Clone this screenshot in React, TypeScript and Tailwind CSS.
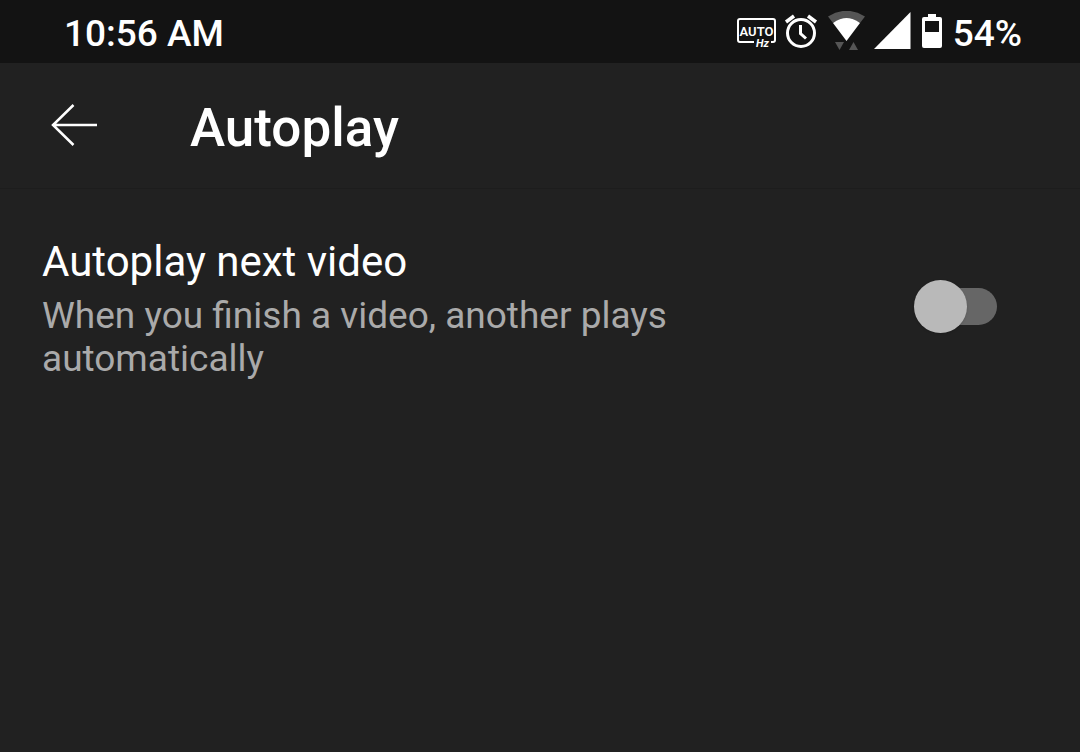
import { useState } from 'react';

function AutoHzIcon() {
  return (
    <svg width="40" height="40" viewBox="0 0 40 40" fill="none" aria-hidden="true">
      <path
        d="M18 31H4a2 2 0 0 1-2-2V10a2 2 0 0 1 2-2h33a2 2 0 0 1 2 2v19a2 2 0 0 1-2 2h-2"
        stroke="white"
        strokeWidth="2"
      />
      <text x="20.500" y="25" fill="white" fontSize="13" fontWeight="600" textAnchor="middle">
        AUTO
      </text>
      <text x="20" y="36" fill="white" fontSize="11" fontWeight="700" fontStyle="italic">
        Hz
      </text>
    </svg>
  );
}

function AlarmIcon() {
  return (
    <svg width="34" height="40" viewBox="0 0 34 40" fill="none" stroke="white" aria-hidden="true">
      <circle cx="17" cy="22" r="13.5" strokeWidth="3" />
      <path d="M16.500 14v8.500l5.500 5" strokeWidth="3" />
      <path d="M2 11l8-6M32 11l-8-6" strokeWidth="3.500" />
    </svg>
  );
}

function WifiIcon() {
  return (
    <svg width="38" height="40" viewBox="0 0 38 40" aria-hidden="true">
      <path d="M0 5.500Q18.500-6 37 5.500L32 12Q18.500 2 5 12z" fill="#555555" />
      <path d="M5 12Q18.500 2 32 12L18.500 30z" fill="white" />
      <path d="M7 31h9l-4.500 8zM21 39h9l-4.500-8z" fill="#555555" />
    </svg>
  );
}

function SignalIcon() {
  return (
    <svg width="38" height="38" viewBox="0 0 38 38" fill="white" aria-hidden="true">
      <path d="M0 37L36.500 0v37z" />
    </svg>
  );
}

function BatteryIcon() {
  return (
    <svg width="20" height="34" viewBox="0 0 20 34" aria-hidden="true">
      <path d="M6 0h8v3h4a2 2 0 0 1 2 2v27a2 2 0 0 1-2 2H2a2 2 0 0 1-2-2V5a2 2 0 0 1 2-2h4z" fill="white" />
      <path d="M3 7h14v11H3z" fill="#131313" />
    </svg>
  );
}

function StatusBar() {
  return (
    <div className="flex h-[63px] items-center justify-between bg-[#131313] pt-1 pr-[58px] pl-16 text-[37px] leading-[43px] font-medium">
      <span>10:56 AM</span>
      <div className="flex items-center">
        <div className="mr-[11px] flex items-center pb-1.5">
          <AutoHzIcon />
          <div className="mr-2.5 ml-2">
            <AlarmIcon />
          </div>
          <WifiIcon />
          <div className="mr-2.5 ml-2">
            <SignalIcon />
          </div>
          <BatteryIcon />
        </div>
        <span>54%</span>
      </div>
    </div>
  );
}

export default function App() {
  const [autoplay, setAutoplay] = useState(false);

  return (
    <div className="flex min-h-screen flex-col bg-[#212121] font-['Roboto',sans-serif] text-white">
      <StatusBar />

      <header className="flex h-[126px] items-center border-b border-[#1d1d1d] pl-[51px]">
        <button type="button" aria-label="Back" className="mr-[92px]">
          <svg width="47" height="44" viewBox="0 0 47 44" fill="none" stroke="white" strokeWidth="2.500" aria-hidden="true">
            <path d="M22.500 1L2 21l20.500 20M2 21h44" />
          </svg>
        </button>
        <h1 className="pt-1 text-[53px] leading-[62px] font-medium">Autoplay</h1>
      </header>

      <main>
        <label className="flex items-center justify-between pt-12 pr-[83px] pl-[42px]">
          <span className="max-w-[700px]">
            <span className="block text-[42px] leading-[50px]">Autoplay next video</span>
            <span id="autoplay-hint" className="mt-[7px] block text-[37px] leading-[43px] text-[#aaaaaa]">
              When you finish a video, another plays automatically
            </span>
          </span>
          <input
            type="checkbox"
            role="switch"
            aria-describedby="autoplay-hint"
            checked={autoplay}
            onChange={(e) => setAutoplay(e.target.checked)}
            className="relative mb-1 h-[37px] w-20 shrink-0 appearance-none rounded-full bg-[#666666] before:absolute before:-top-2 before:-left-[3px] before:size-[53px] before:rounded-full before:bg-[#b9b9b9] before:shadow before:transition-transform checked:bg-[#3d6a94] checked:before:translate-x-8 checked:before:bg-[#3ea6ff]"
          />
        </label>
      </main>
    </div>
  );
}
